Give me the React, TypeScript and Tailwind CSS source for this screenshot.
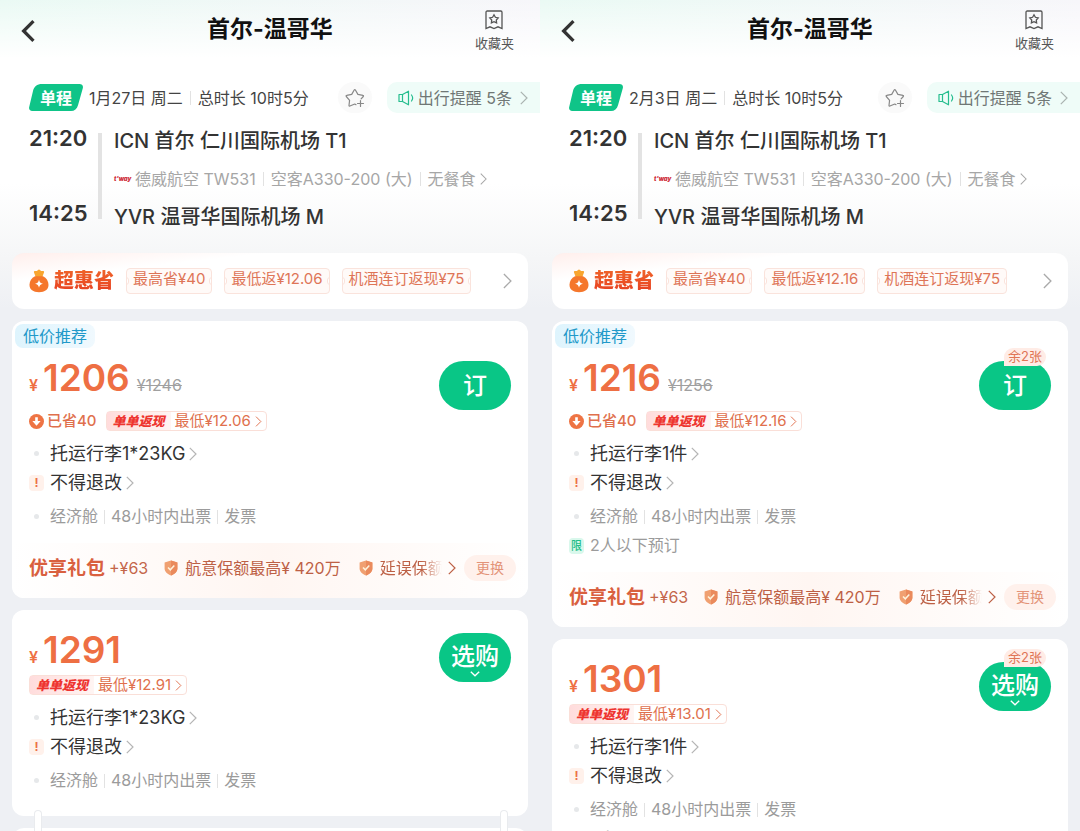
import { ReactNode } from 'react'
import clsx from 'clsx'

type Fare = {
  price: string
  oldPrice?: string
  saved?: string
  cashback: string
  baggage: string
  limit?: string
  seats?: string
  gift?: boolean
}

type Trip = {
  id: string
  date: string
  promos: string[]
  fares: Fare[]
}

const TRIPS: Trip[] = [
  {
    id: 'jan27',
    date: '1月27日 周二',
    promos: ['最高省¥40', '最低返¥12.06', '机酒连订返现¥75'],
    fares: [
      { price: '1206', oldPrice: '¥1246', saved: '已省40', cashback: '最低¥12.06', baggage: '托运行李1*23KG', gift: true },
      { price: '1291', cashback: '最低¥12.91', baggage: '托运行李1*23KG' },
    ],
  },
  {
    id: 'feb3',
    date: '2月3日 周二',
    promos: ['最高省¥40', '最低返¥12.16', '机酒连订返现¥75'],
    fares: [
      {
        price: '1216',
        oldPrice: '¥1256',
        saved: '已省40',
        cashback: '最低¥12.16',
        baggage: '托运行李1件',
        limit: '2人以下预订',
        seats: '余2张',
        gift: true,
      },
      { price: '1301', cashback: '最低¥13.01', baggage: '托运行李1件', limit: '2人以下预订', seats: '余2张' },
    ],
  },
]

function Chevron({ className }: { className?: string }) {
  return (
    <svg viewBox="0 0 8 14" fill="none" stroke="currentColor" strokeWidth="1.2" className={clsx('shrink-0', className)}>
      <path d="M0.8 0.8 7 7l-6.2 6.2" />
    </svg>
  )
}

function Divider({ className = 'mx-1.5' }: { className?: string }) {
  return <span className={clsx('w-px h-3.5 bg-[#e2e2e2] shrink-0', className)} />
}

function Shield() {
  return (
    <svg viewBox="0 0 14 16" className="w-3.5 h-4 shrink-0">
      <path d="M7 .6 13.4 2.6v6c0 3.4-2.8 5.6-6.4 7C3.4 14.2.6 12 .6 8.6v-6z" fill="#f0a071" />
      <path d="M7 .6 13.4 2.6v6c0 3.4-2.8 5.6-6.4 7z" fill="#ea8a5c" />
      <path d="m4 7.5 2.3 2.3 4-4.3" fill="none" stroke="#fff3dc" strokeWidth="1.5" />
    </svg>
  )
}

function Header() {
  return (
    <header className="grid grid-cols-[1fr_auto_1fr] items-center h-[58px] px-5">
      <button aria-label="返回" className="justify-self-start mt-1 text-[#333]">
        <svg viewBox="0 0 14 22" fill="none" stroke="currentColor" strokeWidth="3" className="w-4 h-6">
          <path d="M12 2 3 11l9 9" />
        </svg>
      </button>
      <h1 className="text-[23px] leading-8 font-bold text-[#111]">首尔-温哥华</h1>
      <button className="justify-self-end flex flex-col items-center gap-[5px] mr-1.5 pt-0.5 text-[#555]">
        <svg viewBox="0 0 18 20" fill="none" stroke="currentColor" strokeWidth="1.3" className="w-[18px] h-5">
          <path d="M1 2.2C1 1.5 1.5 1 2.2 1h13.6c.7 0 1.2.5 1.2 1.2v16.3l-4-1.7-4 1.7-4-1.7-4 1.7z" />
          <path d="m9 4.8 1.4 2.5 2.8.6-1.9 2.1.3 2.9L9 11.7l-2.6 1.2.3-2.9-1.9-2.1 2.8-.6z" />
        </svg>
        <span className="text-[13px] leading-4">收藏夹</span>
      </button>
    </header>
  )
}

function SummaryRow({ date }: { date: string }) {
  return (
    <div className="flex items-center h-[31px] pl-[29px] text-base text-[#444] whitespace-nowrap">
      <span className="relative w-[54px] h-[27px] flex items-center justify-center font-bold text-white">
        <svg viewBox="0 0 54 27" className="absolute inset-0 w-full h-full">
          <path d="M13 0h37.5c2.5 0 4 1.8 3.3 4.2l-4.8 17C48 25 45.5 27 42 27H3.2C.9 27-.4 25.3.2 23L4 7C5.2 2.3 8 0 13 0z" fill="#0fc488" />
        </svg>
        <span className="relative">单程</span>
      </span>
      <span className="ml-1.5">{date}</span>
      <Divider className="mx-[7px]" />
      <span>总时长 10时5分</span>
      <button aria-label="收藏" className="ml-auto w-[34px] h-[31px] rounded-full bg-[#fafafa] flex items-center justify-center text-[#888]">
        <svg viewBox="0 0 20 20" fill="none" stroke="currentColor" strokeWidth="1.2" strokeLinejoin="round" strokeLinecap="round" className="w-5 h-5">
          <path d="M11 16.7 9.8 16l-4.9 2c-.6.2-1-.1-.9-.7l.6-5L1.3 8.5c-.4-.5-.2-1 .4-1.1l5-1L9.2 2c.3-.5.9-.5 1.2 0l2.5 4.4 5 1c.6.1.8.6.4 1.1l-2.2 2.4" />
          <path d="M15.5 12.5v6M12.5 15.5h6" />
        </svg>
      </button>
      <button className="ml-[15px] h-[31px] pl-[11px] pr-3 rounded-l-[10px] bg-[#effcf8] flex items-center text-[#6f7775]">
        <svg viewBox="0 0 16 16" fill="none" stroke="#25bd8e" strokeWidth="1.2" strokeLinejoin="round" strokeLinecap="round" className="w-4 h-4 mr-1">
          <path d="M1 4.5h3.5l6-3.3v13.6l-6-3.3H1z" />
          <path d="M4.5 4.5v7M13.5 5c1.300 1.700 1.300 4.300 0 6" />
        </svg>
        出行提醒 5条
        <Chevron className="w-2 h-3.5 ml-2 text-[#aab3b0]" />
      </button>
    </div>
  )
}

function Itinerary() {
  return (
    <div className="flex mt-[14px] pl-[29px] h-[104px] whitespace-nowrap text-[#333]">
      <div className="w-[58px] pb-[7px] flex flex-col justify-between text-[22px] leading-[22px] font-semibold">
        <time>21:20</time>
        <time>14:25</time>
      </div>
      <div className="w-1 ml-[11px] mt-1.5 mb-3 bg-[#e3e3e3]" />
      <div className="ml-3 flex flex-col justify-between leading-7">
        <p className="text-xl font-medium">ICN 首尔 仁川国际机场 T1</p>
        <p className="flex items-center text-base leading-7 text-[#a6a6a6]">
          <span className="w-[21px] text-[6px] font-black italic text-[#cf2f3c]">t'way</span>
          德威航空 TW531
          <Divider className="mx-[7px]" />
          空客A330-200 (大)
          <Divider className="mx-[7px]" />
          无餐食
          <Chevron className="w-[7px] h-3 ml-1" />
        </p>
        <p className="text-xl font-medium">YVR 温哥华国际机场 M</p>
      </div>
    </div>
  )
}

function PromoTag({ children }: { children: ReactNode }) {
  return (
    <span className="relative h-[26px] px-1.5 pb-[3px] flex items-center rounded border border-[#fae3dc] bg-[#fffaf8] text-[15px] text-[#de7557] overflow-hidden">
      <span className="absolute -left-1 top-2 w-1.5 h-2 rounded-full border border-[#fae3dc] bg-white" />
      {children}
      <span className="absolute -right-1 top-2 w-1.5 h-2 rounded-full border border-[#fae3dc] bg-white" />
    </span>
  )
}

function PromoBar({ promos }: { promos: string[] }) {
  return (
    <div className="mx-3 mt-[22px] h-14 rounded-xl bg-white bg-linear-to-br from-[#ffefec] to-white to-25% flex items-center pl-[17px] pr-4 whitespace-nowrap">
      <svg viewBox="0 0 20 24" className="w-5 h-6 shrink-0">
        <path d="M5 3.5c-.4-.9.3-1.5 1.2-1.4C7.5 2.2 8.3 1.7 9 .9c.6-.7 1.4-.7 2 0 .7.8 1.500 1.300 2.800 1.200.9-.1 1.600.5 1.200 1.400L13.300 8H6.700z" fill="#f8a52f" />
        <path d="M6 7.200h8c3.500 1.600 5.500 4.800 5.500 8.600 0 4.900-3.600 7.400-9.500 7.400S.5 20.700.5 15.800C.5 12 2.500 8.800 6 7.200z" fill="#f5772c" />
        <path d="M10 10.800c.5 2.500 1.500 3.500 4 4-2.500.5-3.500 1.500-4 4-.5-2.500-1.500-3.500-4-4 2.500-.5 3.500-1.500 4-4z" fill="#fff" />
      </svg>
      <span className="ml-[5px] text-xl font-black bg-linear-to-b from-[#f0672a] to-[#e63a22] bg-clip-text text-transparent">超惠省</span>
      <div className="ml-3 flex gap-3">
        {promos.map((p) => (
          <PromoTag key={p}>{p}</PromoTag>
        ))}
      </div>
      <Chevron className="w-[9px] h-4 ml-auto text-[#aaa]" />
    </div>
  )
}

function BuyButton({ fare }: { fare: Fare }) {
  return (
    <div className="relative mt-[5px] mr-[17px] shrink-0">
      <button
        className={clsx(
          'w-[72px] h-[49px] rounded-full bg-[#09c686] text-white text-2xl font-medium flex flex-col items-center justify-center',
          !fare.gift && 'pt-[5px]',
        )}
      >
        <span className="leading-7">{fare.gift ? '订' : '选购'}</span>
        {!fare.gift && (
          <svg viewBox="0 0 10 6" fill="none" stroke="currentColor" strokeWidth="1.4" className="w-[10px] h-1.5">
            <path d="m.8.8 4.2 4 4.2-4" />
          </svg>
        )}
      </button>
      {fare.seats && (
        <span className="absolute -top-[13px] right-[5px] h-[18px] px-1 rounded-full rounded-bl-sm bg-[#ffece6] text-[13px] leading-4 text-[#e07455]">
          {fare.seats}
        </span>
      )}
    </div>
  )
}

function Dot() {
  return (
    <span className="w-[21px] pl-[5px] shrink-0">
      <span className="block w-[5px] h-[5px] rounded-full bg-[#e6e8ea]" />
    </span>
  )
}

function GiftRow() {
  return (
    <div className="mt-3 h-[55px] pl-[17px] pr-3 pb-[5px] flex items-center rounded-b-xl whitespace-nowrap text-base text-[#bd6045] bg-linear-to-r from-white via-[#fff6f2] to-white">
      <span className="flex items-center gap-1 text-[#c4664a]">
        <span className="pt-0.5 text-[19px] font-bold text-[#d9603f]">优享礼包</span>
        <span>+¥63</span>
      </span>
      <span className="ml-4 flex items-center gap-[7px]">
        <Shield />
        航意保额最高¥ 420万
      </span>
      <span className="ml-[18px] flex-1 min-w-0 flex items-center gap-[7px] overflow-hidden mask-r-from-75% mask-r-to-100%">
        <Shield />
        延误保额
      </span>
      <Chevron className="w-2 h-3.5 ml-1.5" />
      <button className="ml-2 w-[52px] h-[26px] shrink-0 rounded-full bg-[#fff1ec] text-sm text-[#e39378]">更换</button>
    </div>
  )
}

function FareCard({ fare }: { fare: Fare }) {
  return (
    <section className={clsx('mx-3 rounded-xl bg-white', fare.gift ? 'pt-[3px]' : 'pt-[18px] pb-[21px]')}>
      {fare.gift && (
        <div className="ml-[3px] mb-2 w-fit h-6 px-2 rounded-lg bg-linear-to-r from-[#def4fd] to-[#f0f9fe] text-base leading-6 text-[#2199c9]">
          低价推荐
        </div>
      )}
      <div className="flex justify-between items-start pl-[17px] whitespace-nowrap">
        <div>
          <div className="h-11 flex items-baseline leading-[44px] text-[#ee6f43]">
            <span className="w-3.5 text-base font-semibold">¥</span>
            <span className="text-[37px] font-semibold">{fare.price}</span>
            {fare.oldPrice && <del className="ml-[7px] text-base text-[#a0a0a0]">{fare.oldPrice}</del>}
          </div>
          <div className={clsx('h-5 flex items-center text-[15px] text-[#e0704d]', fare.gift ? 'mt-[11px]' : 'mt-[3px]')}>
            {fare.saved && (
              <span className="mr-[9px] flex items-center gap-[3px] font-medium">
                <svg viewBox="0 0 16 16" className="w-[15px] h-[15px]">
                  <circle cx="8" cy="8" r="8" fill="#ee7444" />
                  <path d="M6.6 3.5h2.8v4h3L8 12.6 3.6 7.5h3z" fill="#fff" />
                </svg>
                {fare.saved}
              </span>
            )}
            <a href="#cashback" className="h-5 flex items-center border border-[#fadfd8] rounded-sm">
              <span className="h-full px-1.5 mr-1 bg-linear-to-r from-[#ffdcdc] to-[#fff5f3] text-[13px] leading-[18px] font-black italic text-[#ee3530]">
                单单返现
              </span>
              <span>{fare.cashback}</span>
              <Chevron className="w-[7px] h-[11px] ml-1 mr-1" />
            </a>
          </div>
          <div className="mt-2 text-lg leading-[29px] text-[#333]">
            <div className="flex items-center [font-variant-ligatures:no-contextual]">
              <Dot />
              {fare.baggage}
              <Chevron className="w-2 h-3.5 ml-1 text-[#b5b5b5]" />
            </div>
            <div className="flex items-center">
              <span className="w-[15px] h-4 mr-1.5 rounded-sm bg-[#fff1eb] text-xs leading-4 font-bold text-center text-[#ec7146]">!</span>
              不得退改
              <Chevron className="w-2 h-3.5 ml-1 text-[#b5b5b5]" />
            </div>
          </div>
          <div className="mt-[5px] text-base leading-[29px] text-[#9b9b9b]">
            <div className="flex items-center">
              <Dot />
              经济舱
              <Divider />
              48小时内出票
              <Divider />
              发票
            </div>
            {fare.limit && (
              <div className="flex items-center">
                <span className="w-[15px] h-4 mr-1.5 rounded-sm bg-[#d9f8ec] text-[11px] leading-4 text-center font-medium text-[#1fbd88]">限</span>
                {fare.limit}
              </div>
            )}
          </div>
        </div>
        <BuyButton fare={fare} />
      </div>
      {fare.gift && <GiftRow />}
    </section>
  )
}

// ring that ties two stacked cards together
function Clip({ className }: { className: string }) {
  return <span className={clsx('absolute -top-[18px] w-2 h-6 rounded-t-full border border-b-0 border-[#e9ebee] bg-white', className)} />
}

function FlightScreen({ trip }: { trip: Trip }) {
  return (
    <main className="min-w-0 overflow-hidden bg-[#eef0f4]">
      <div className="bg-linear-to-r from-[#eafaf4] to-[#f7f6fa]">
        <div className="bg-linear-to-b from-transparent to-white">
          <Header />
        </div>
      </div>
      <div className="bg-linear-to-b from-white from-50% via-[#f5f6f7] via-80% to-[#eef0f4] pt-6">
        <SummaryRow date={trip.date} />
        <Itinerary />
        <PromoBar promos={trip.promos} />
      </div>
      <div className="mt-3 flex flex-col gap-3">
        {trip.fares.map((fare) => (
          <FareCard key={fare.price} fare={fare} />
        ))}
        <div className="relative mx-3 h-24 rounded-xl bg-white">
          <Clip className="left-[22px]" />
          <Clip className="right-5" />
        </div>
      </div>
    </main>
  )
}

export default function App() {
  return (
    <div className="grid grid-cols-2 h-screen overflow-hidden font-['Inter','Noto_Sans_CJK_SC',sans-serif]">
      {TRIPS.map((trip) => (
        <FlightScreen key={trip.id} trip={trip} />
      ))}
    </div>
  )
}
